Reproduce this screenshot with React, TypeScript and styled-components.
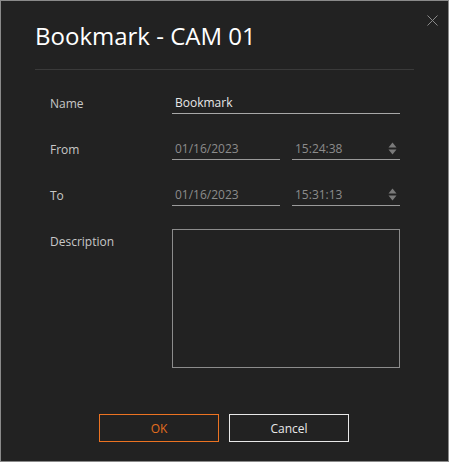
import React from "react";
import styled, { createGlobalStyle } from "styled-components";

const Global = createGlobalStyle`
  html, body { margin: 0; padding: 0; background: #222222; }
  * { box-sizing: border-box; }
`;

const Dialog = styled.div`
  position: relative;
  width: 449px;
  height: 462px;
  background: #222222;
  border: 1px solid #8a8a8a;
  font-family: "Open Sans", "Noto Sans", sans-serif;
  display: flex;
  flex-direction: column;
`;

const CloseButton = styled.button`
  position: absolute;
  top: 13px;
  right: 10px;
  width: 12px;
  height: 12px;
  padding: 0;
  border: none;
  background: transparent;
  display: flex;
  align-items: center;
  justify-content: center;
  cursor: pointer;
`;

const Header = styled.div`
  margin: 0 34px;
  padding-top: 18px;
  height: 69px;
  border-bottom: 1px solid #3a3a3a;
`;

const Title = styled.h1`
  margin: 0;
  font-size: 24px;
  font-weight: 400;
  line-height: 33px;
  color: #ffffff;
`;

const Form = styled.div`
  display: grid;
  grid-template-columns: 122px 1fr;
  row-gap: 22px;
  padding: 20px 48px 0 49px;
`;

const Label = styled.label<{ $top?: boolean }>`
  font-size: 12px;
  color: #c8c8c8;
  line-height: 17px;
  align-self: ${(p) => (p.$top ? "start" : "center")};
  padding-top: ${(p) => (p.$top ? "5px" : "3px")};
`;

const Pair = styled.div`
  display: grid;
  grid-template-columns: 1fr 1fr;
  column-gap: 12px;
`;

const Field = styled.div<{ $bright?: boolean }>`
  height: 24px;
  display: flex;
  align-items: center;
  justify-content: space-between;
  padding: 2px 3px 0 3px;
  border-bottom: 1px solid ${(p) => (p.$bright ? "#a8a8a8" : "#9a9a9a")};
  font-size: 12px;
  color: ${(p) => (p.$bright ? "#e8e8e8" : "#8c8c8c")};
`;

const TextArea = styled.div`
  height: 139px;
  margin-top: 1px;
  border: 1px solid #8c8c8c;
`;

const Footer = styled.div`
  display: flex;
  justify-content: center;
  gap: 10px;
  margin-top: 46px;
  padding-right: 1px;
`;

const Button = styled.button<{ $primary?: boolean }>`
  width: 120px;
  height: 28px;
  background: transparent;
  border: 1px solid ${(p) => (p.$primary ? "#ec7322" : "#e8e8e8")};
  color: ${(p) => (p.$primary ? "#e26d1e" : "#e8e8e8")};
  font-family: "Open Sans", "Noto Sans", sans-serif;
  font-size: 12px;
  padding: 0;
  cursor: pointer;
`;

const Spinner = () => (
  <svg width="9" height="13" viewBox="0 0 9 13">
    <path d="M4.5 0.5 L8.5 5.5 L0.5 5.5 Z" fill="#7a7a7a" />
    <path d="M0.5 7.5 L8.5 7.5 L4.5 12.5 Z" fill="#7a7a7a" />
  </svg>
);

const CloseIcon = () => (
  <svg width="11" height="11" viewBox="0 0 11 11">
    <path d="M0.5 0.5 L10.5 10.5 M10.5 0.5 L0.5 10.5" stroke="#8a8a8a" strokeWidth="1" />
  </svg>
);

export default function App() {
  return (
    <>
      <Global />
      <Dialog>
        <CloseButton aria-label="Close">
          <CloseIcon />
        </CloseButton>
        <Header>
          <Title>Bookmark - CAM 01</Title>
        </Header>
        <Form>
          <Label>Name</Label>
          <Field $bright>Bookmark</Field>

          <Label>From</Label>
          <Pair>
            <Field>01/16/2023</Field>
            <Field>
              15:24:38
              <Spinner />
            </Field>
          </Pair>

          <Label>To</Label>
          <Pair>
            <Field>01/16/2023</Field>
            <Field>
              15:31:13
              <Spinner />
            </Field>
          </Pair>

          <Label $top>Description</Label>
          <TextArea />
        </Form>
        <Footer>
          <Button $primary>OK</Button>
          <Button>Cancel</Button>
        </Footer>
      </Dialog>
    </>
  );
}
